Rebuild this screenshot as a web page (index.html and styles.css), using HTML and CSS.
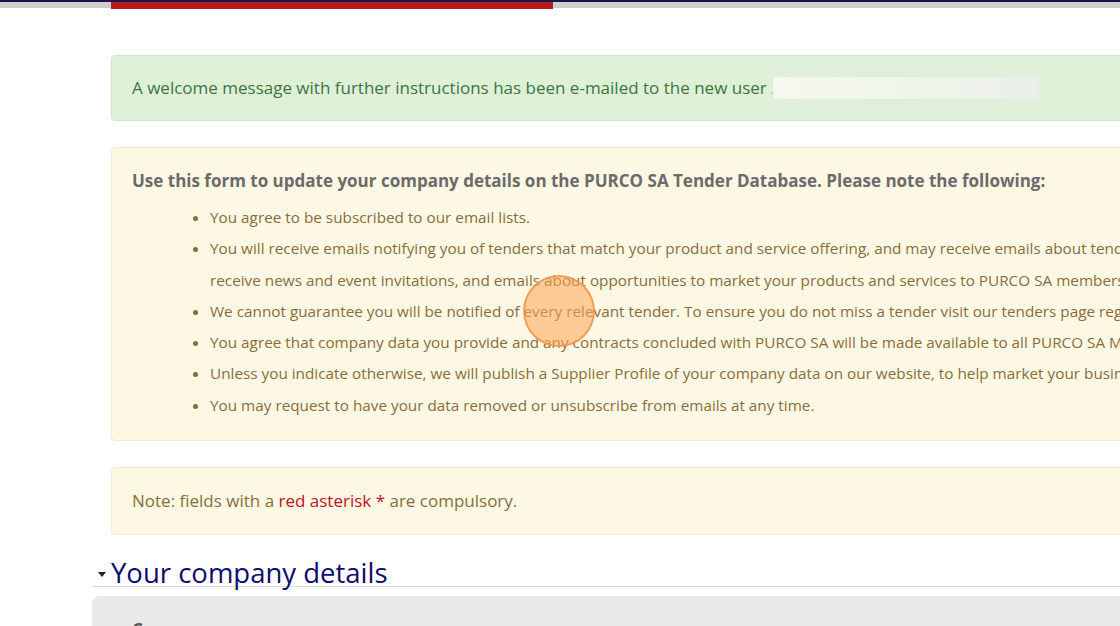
FILE: index.html
```html
<!DOCTYPE html>
<html lang="en">
<head>
    <meta charset="UTF-8">
    <meta name="viewport" content="width=device-width, initial-scale=1.0">
    <title>Update Company Details - PURCO SA Tender Database</title>
    <link rel="stylesheet" href="styles.css">
</head>
<body>
    <!-- Top bar -->
    <div class="topbar">
        <div class="topbar-progress"></div>
    </div>

    <div class="page">
        <!-- Status messages -->
        <div class="alert alert-success">
            A welcome message with further instructions has been e-mailed to the new user <span class="redacted-dot">.</span><span class="redacted"></span>
        </div>

        <div class="alert alert-warning">
            <p class="intro">Use this form to update your company details on the PURCO SA Tender Database. Please note the following:</p>
            <ul class="notes">
                <li>You agree to be subscribed to our email lists.</li>
                <li>You will receive emails notifying you of tenders that match your product and service offering, and may receive emails about tenders outside your offering. You may also<br>receive news and event invitations, and emails about opportunities to market your products and services to PURCO SA members.</li>
                <li>We cannot guarantee you will be notified of every relevant tender. To ensure you do not miss a tender visit our tenders page regularly.</li>
                <li>You agree that company data you provide and any contracts concluded with PURCO SA will be made available to all PURCO SA Members.</li>
                <li>Unless you indicate otherwise, we will publish a Supplier Profile of your company data on our website, to help market your business.</li>
                <li>You may request to have your data removed or unsubscribe from emails at any time.</li>
            </ul>
        </div>

        <div class="alert alert-warning alert-note">
            Note: fields with a <span class="required">red asterisk *</span> are compulsory.
        </div>

        <!-- Company details section -->
        <h2 class="section-title"><span class="caret"></span>Your company details</h2>
        <div class="section-box">
            <div class="field-label">Company name</div>
        </div>
    </div>

    <!-- click marker from the screen recording -->
    <div class="click-marker"></div>
</body>
</html>
```

FILE: styles.css
```css
body {
    font-family: "Open Sans", Arial, sans-serif;
    font-size: 17px;
    margin: 0;
    padding: 0;
    background-color: #fff;
    overflow: hidden;
    height: 626px;
    position: relative;
}

.topbar {
    height: 2px;
    background-color: #1b1450;
    border-bottom: 6px solid #cfcfcf;
    position: relative;
}

.topbar-progress {
    position: absolute;
    left: 111px;
    top: 2px;
    width: 442px;
    height: 7px;
    background-color: #b31b1b;
}

.page {
    padding: 47px 0 0 92px;
    width: 1200px;
}

.alert {
    margin-left: 19px;
    border: 1px solid;
    border-radius: 4px;
    padding: 20px 20px;
    line-height: 24px;
}

.alert-success {
    background-color: #dff0d8;
    border-color: #d3e6c6;
    color: #3c763d;
    margin-bottom: 26px;
    height: 24px;
    white-space: nowrap;
}

.redacted-dot {
    color: #33466b;
}

.redacted {
    display: inline-block;
    vertical-align: middle;
    width: 266px;
    height: 22px;
    margin-top: -3px;
    margin-left: -3px;
    background: linear-gradient(90deg, #f4f8ef 0%, #f1f6ec 40%, #eef3ea 70%, #eaeeea 100%);
}

.alert-warning {
    background-color: #fcf8e3;
    border-color: #f4ead0;
    color: #8a6d3b;
    margin-bottom: 26px;
}

.alert-warning:not(.alert-note) {
    padding: 21px 20px 19px 20px;
}

.intro {
    margin: 0;
    font-weight: bold;
    color: #6b6b6b;
    white-space: nowrap;
}

.notes {
    margin: 9px 0 0 0;
    padding-left: 78px;
    font-size: 15.3px;
    line-height: 31.3px;
    white-space: nowrap;
}

.alert-note {
    padding: 21px 20px;
    margin-bottom: 25px;
}

.required {
    color: #c1121f;
}

.section-title {
    margin: 0;
    font-size: 27.5px;
    font-weight: normal;
    color: #0d0c6e;
    line-height: 26px;
    border-bottom: 1px solid #dcdcdc;
    display: flex;
    align-items: center;
}

.caret {
    display: inline-block;
    width: 0;
    height: 0;
    margin: 2px 5px 0 6px;
    border-left: 4px solid transparent;
    border-right: 4px solid transparent;
    border-top: 5px solid #222;
}

.section-box {
    margin-top: 9px;
    background-color: #e9e9e9;
    border-radius: 8px;
    padding: 22px 40px;
    height: 200px;
}

.field-label {
    font-weight: bold;
    color: #555;
}

.click-marker {
    position: absolute;
    left: 523px;
    top: 275px;
    width: 68px;
    height: 68px;
    border-radius: 50%;
    background-color: rgba(255, 166, 87, 0.55);
    border: 2px solid rgba(240, 150, 70, 0.85);
}
```
